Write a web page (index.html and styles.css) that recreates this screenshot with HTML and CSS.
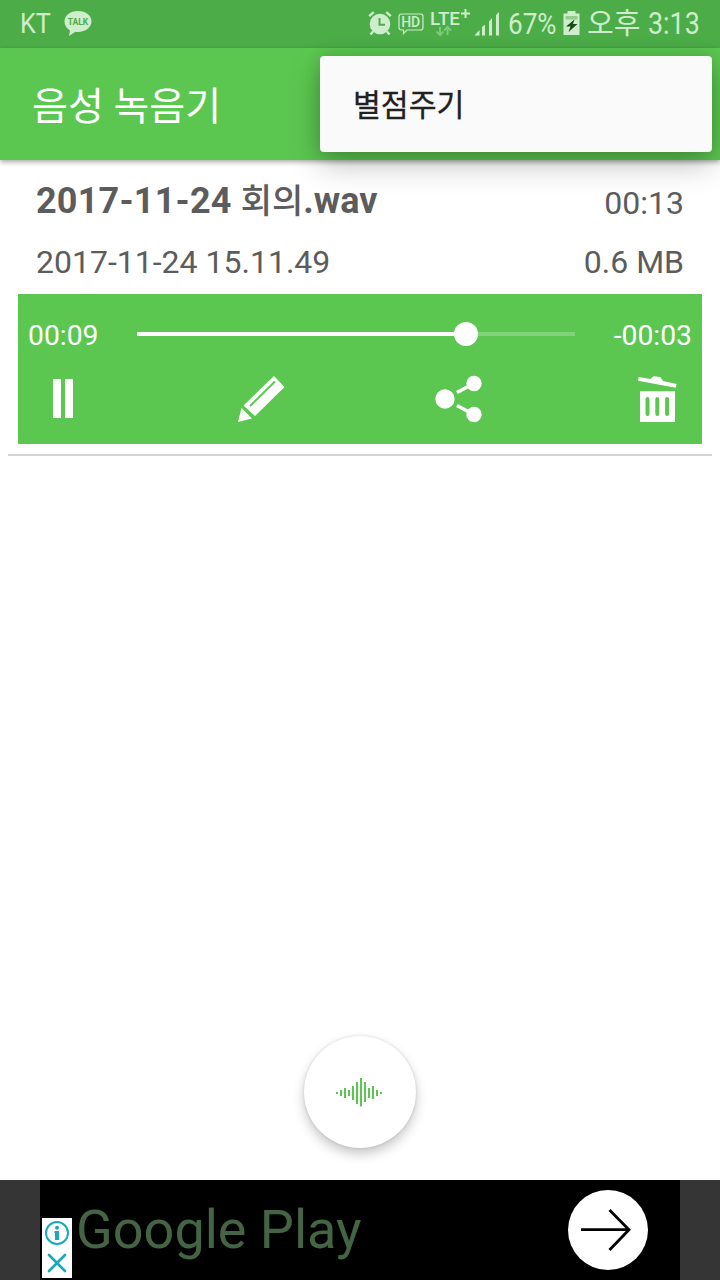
FILE: index.html
```html
<!DOCTYPE html>
<html lang="ko">
<head>
<meta charset="utf-8">
<title>음성 녹음기</title>
<link rel="stylesheet" href="styles.css">
</head>
<body>
<div class="screen">
  <header class="status">
    <span class="carrier"><span>KT</span></span>
    <svg class="talk" width="28" height="26" viewBox="0 0 28 26"><path d="M14 0C6 0 .5 4.600 .5 10.500c0 4 2.300 7 5.500 9L5 25l6.500-4.300C20 22 27.500 17 27.500 10.500 27.500 4.600 22 0 14 0z" fill="#cfeccc"/><text x="3.700" y="14.300" textLength="20.500" lengthAdjust="spacingAndGlyphs" class="talk-label">TALK</text></svg>
    <svg class="alarm" width="24" height="24" viewBox="0 0 24 24"><circle cx="12" cy="13" r="10.300" fill="#cfeccc"/><path d="M1.200 5.200 5.800 1.200M18.200 1.200l4.600 4M5 20.500l-2.500 3M19 20.500l2.500 3" stroke="#cfeccc" stroke-width="2.400" fill="none"/><path d="M11.500 7v6.800H17" stroke="#4cac48" stroke-width="2" fill="none"/></svg>
    <svg class="hd" width="26" height="22" viewBox="0 0 26 22"><path d="M3.500 1h19q2.500 0 2.500 2.500v11q0 2.500-2.500 2.500H9l-3.500 3.500V17h-2Q1 17 1 14.500v-11Q1 1 3.500 1z" stroke="#cfeccc" stroke-width="1.200" fill="none"/><text x="3.200" y="14.300" textLength="19" lengthAdjust="spacingAndGlyphs" class="hd-label">HD</text></svg>
    <svg class="lte" width="41" height="30" viewBox="0 0 41 30"><text x="0" y="17" textLength="30" lengthAdjust="spacingAndGlyphs" class="lte-label">LTE</text><path d="M31 5.500h9M35.500 1v9" stroke="#cfeccc" stroke-width="2"/><path d="M10 19v7M6.500 23.500 10 27l3.500-3.500M17.500 27v-7M14 22.500l3.500-3.500 3.500 3.500" stroke="#7dcb78" stroke-width="2" fill="none"/></svg>
    <svg class="signal" width="26" height="24" viewBox="0 0 26 24"><path d="M.5 23.500 5.500 18v5.500zM8 15l3-2.500v11H8zM15 9.500 18 6v17.500h-3zM22 3l3-3v23.500h-3z" fill="#cfeccc"/></svg>
    <span class="percent"><span>67%</span></span>
    <svg class="battery" width="17" height="25" viewBox="0 0 17 25"><path d="M4.500 0h8v2.500H16.500V24H.5V2.500h4z" fill="#cfeccc"/><path d="M2.500 5h12v3.500h-12z" fill="#92cc8e"/><path d="m11.500 8.500-8.500 7h4.500l-2 5.500 9-8H10z" fill="#174d16"/></svg>
    <span class="ampm">오후</span>
    <span class="clock"><span>3:13</span></span>
  </header>
  <div class="appbar">
    <h1 class="title">음성 녹음기</h1>
    <div class="menu"><span class="menu-item">별점주기</span></div>
  </div>
  <main class="content">
    <section class="recording">
      <div class="row name-row"><span class="name"><span class="name-date">2017-11-24 </span><span class="name-ko">회의</span>.wav</span><span class="meta duration">00:13</span></div>
      <div class="row info-row"><span class="meta">2017-11-24 15.11.49</span><span class="meta">0.6 MB</span></div>
      <div class="player">
        <div class="progress">
          <span class="elapsed">00:09</span>
          <svg class="slider" width="438" height="24" viewBox="0 0 438 24"><path d="M0 12h438" stroke="#81d47b" stroke-width="4"/><path d="M0 12h329" stroke="#fff" stroke-width="4"/><circle cx="329" cy="12" r="12" fill="#fff"/></svg>
          <span class="remaining">-00:03</span>
        </div>
        <div class="actions">
          <svg class="pause" width="20" height="48" viewBox="0 0 20 48"><path d="M0 4h8v39H0zM12 4h8v39h-8z" fill="#fff"/></svg>
          <svg class="edit" width="47" height="48" viewBox="0 0 47 48"><path d="m36 1 10.500 11L17 41 5.500 30.500z" fill="#fff"/><path d="M12 31 37 6.500" stroke="#5bc750" stroke-width="2"/><path d="M3.500 33 14 43.500 0 47z" fill="#fff"/></svg>
          <svg class="share" width="48" height="48" viewBox="0 0 48 48"><g fill="#fff"><circle cx="10" cy="24" r="9.700"/><circle cx="39" cy="8.500" r="7.700"/><circle cx="39" cy="39.500" r="7.700"/></g><path d="m22 17.500 12-6.500M22 30.500 34 37" stroke="#fff" stroke-width="3.600"/></svg>
          <svg class="delete" width="39" height="48" viewBox="0 0 39 48"><path d="m.7 2 11.800 2 3-2.800 7 .8 2.500 4 13.500 3-.8 3.800L0 5.700zM2 16.300h35V47H2z" fill="#fff"/><path d="M9.500 24v15M19.300 24v15M29.100 24v15" stroke="#5bc750" stroke-width="4" stroke-linecap="round"/></svg>
        </div>
      </div>
    </section>
    <div class="record">
      <svg width="46" height="30" viewBox="0 0 46 30"><path d="M1 14v2M5 12v6M9 10v10M13 12v6M17 8v14M21 4v22M25 0v28.500M29 4v20M33 10v10M37 8v13M41 12v6M45 14v2" stroke="#5bc750" stroke-width="2"/></svg>
    </div>
  </main>
  <footer class="ad">
    <div class="ad-body">
      <div class="ad-controls">
        <svg width="30" height="60" viewBox="0 0 30 60"><g fill="none" stroke="#18a9bd" stroke-width="2"><circle cx="15" cy="15" r="11"/><path d="m7 37 16 16M23 37 7 53" stroke-width="2.600" stroke-linecap="round"/></g><circle cx="15" cy="9.700" r="2" fill="#18a9bd"/><path d="M12.500 13H17v9h-4v-7h-.5z" fill="#18a9bd"/></svg>
      </div>
      <span class="ad-title">Google Play</span>
      <svg class="ad-arrow" width="80" height="80" viewBox="0 0 80 80"><circle cx="40" cy="40" r="40" fill="#fff"/><path d="M13 39.700h48M41.500 20 61 39.700 41.500 60" fill="none" stroke="#000" stroke-width="2.800"/></svg>
    </div>
  </footer>
</div>
</body>
</html>
```

FILE: styles.css
```css
* { box-sizing: border-box; }
body { margin: 0; background: #fff; font-family: Roboto, "Noto Sans CJK KR", sans-serif; color: #5c5c5c; }
svg { display: block; flex: none; }
.screen { width: 720px; height: 1280px; display: flex; flex-direction: column; overflow: hidden; }

.status { height: 48px; flex: none; display: flex; align-items: flex-start; padding-left: 20px; background: #4cac48; color: #cfeccc; white-space: nowrap; line-height: 32px; }
.status > * { flex: none; }
.carrier { width: 44px; margin-top: 8px; font-size: 28px; }
.carrier span { display: inline-block; transform: scaleX(.9); transform-origin: left; }
.talk { margin-top: 11px; margin-right: 276px; }
.talk-label { font: 700 9px Roboto, sans-serif; fill: #4cac48; }
.alarm { margin-top: 11px; margin-right: 6px; }
.hd { margin-top: 13px; margin-right: 6px; }
.hd-label { font: 500 14px Roboto, sans-serif; fill: #cfeccc; }
.lte { margin-top: 8px; margin-right: 3px; }
.lte-label { font: 500 18.500px Roboto, sans-serif; fill: #cfeccc; }
.signal { margin-top: 12px; margin-right: 8px; }
.percent { width: 55px; margin-top: 8px; font-size: 30px; }
.percent span, .clock span { display: inline-block; transform: scaleX(.87); transform-origin: left; }
.battery { margin-top: 11px; margin-right: 7px; }
.ampm { width: 61px; margin-top: 8px; font-size: 29px; }
.clock { margin-top: 8px; font-size: 31px; }
.clock span { transform: scaleX(.865); }

.appbar { height: 112px; flex: none; position: relative; z-index: 1; display: flex; align-items: center; padding: 6px 0 0 32px; background: #5bc750; box-shadow: 0 2px 5px rgba(0, 0, 0, .35); }
.title { margin: 0; font-size: 39px; font-weight: 400; line-height: 56px; color: #fff; }
.menu { position: absolute; top: 8px; right: 8px; width: 392px; height: 96px; display: flex; align-items: center; padding: 3px 0 0 33px; border-radius: 4px; background: #fafafa; box-shadow: 0 12px 30px rgba(0, 0, 0, .26), 0 0 16px rgba(0, 0, 0, .12); }
.menu-item { font-size: 30.300px; -webkit-text-stroke: .3px #212121; line-height: 40px; color: #212121; }

.content { flex: 1; display: flex; flex-direction: column; justify-content: space-between; align-items: center; padding: 8px 8px 32px; }
.recording { width: 704px; padding: 0 10px 10px; border-bottom: 2px solid #d5d5d5; }
.row { display: flex; justify-content: space-between; align-items: center; padding: 0 18px; white-space: nowrap; }
.name-row { height: 66px; }
.info-row { height: 60px; padding-bottom: 4px; }
.name { font-size: 36px; font-weight: 700; line-height: 48px; }
.name-date { letter-spacing: .2px; }
.name-ko { font-size: 34px; font-weight: 500; }
.meta { font-size: 32px; line-height: 40px; }
.duration { padding-top: 4px; }
.player { height: 150px; background: #5bc750; color: #fff; }
.progress { display: flex; align-items: center; justify-content: space-between; height: 80px; padding: 0 10px; font-size: 28.300px; }
.elapsed { width: 109px; padding-top: 2px; }
.remaining { width: 117px; padding-top: 2px; text-align: right; }
.actions { display: flex; padding: 1px 25px 0 35px; }
.edit { margin-left: 165px; }
.share { margin-left: 150px; }
.delete { margin-left: auto; }
.record { width: 112px; height: 112px; border-radius: 50%; display: flex; align-items: center; justify-content: center; padding: 1px 2px 0 0; background: #fff; box-shadow: 0 6px 12px rgba(0, 0, 0, .22), 0 0 3px rgba(0, 0, 0, .14); }

.ad { height: 100px; flex: none; display: flex; justify-content: center; background: #353535; }
.ad-body { width: 640px; display: flex; align-items: center; background: #000; }
.ad-controls { width: 30px; height: 60px; align-self: flex-end; margin: 0 4px 2px 2px; background: #fff; }
.ad-title { flex: 1; font-size: 54px; line-height: 64px; color: #446444; white-space: nowrap; }
.ad-arrow { margin-right: 32px; }
```
